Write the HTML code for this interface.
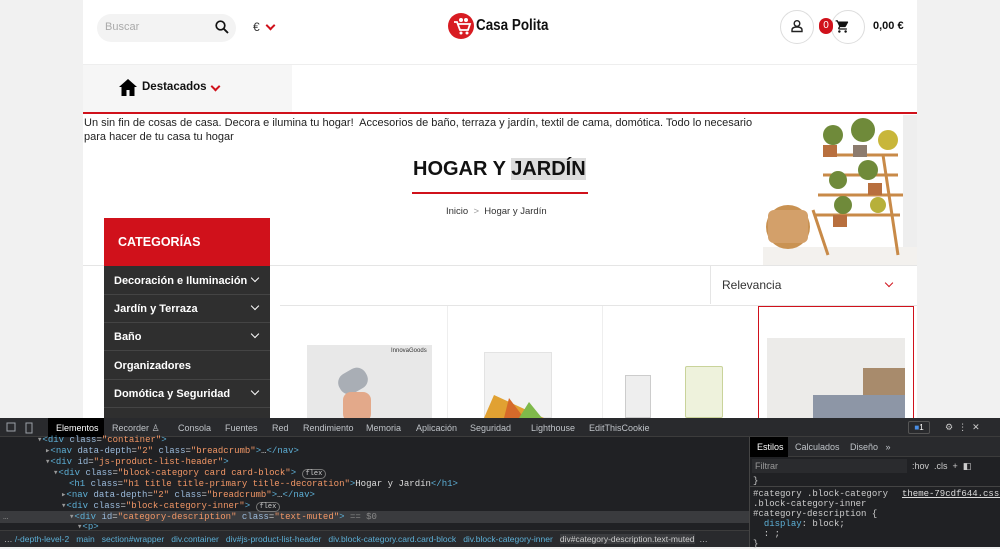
<!DOCTYPE html>
<html><head><meta charset="utf-8"><style>
*{box-sizing:border-box;margin:0;padding:0}
body{width:1000px;height:547px;overflow:hidden;background:#f1f1f1;font-family:"Liberation Sans","DejaVu Sans",sans-serif;position:relative}
.abs{position:absolute}
.c{position:absolute;left:83px;top:0;width:834px;height:418px;background:#fff;overflow:hidden}
.mono{font-family:"Liberation Mono","DejaVu Sans Mono",monospace}
.chev{display:inline-block;width:7px;height:7px;border-right:2px solid #d0111b;border-bottom:2px solid #d0111b;transform:rotate(45deg)}
.wch{position:absolute;right:12px;width:6px;height:6px;border-right:1.5px solid #fff;border-bottom:1.5px solid #fff;transform:rotate(45deg)}
.cat{position:absolute;left:0;width:166px;height:28px;background:#2f2f2f;color:#fff;font-weight:bold;font-size:11px;padding:8px 0 0 10px;border-bottom:1px solid #444}
.tab{color:#bfc3c8;font-size:9px;position:absolute;top:5px}
.dl{position:absolute;font-size:9px;color:#ccc;white-space:nowrap}
.tg{color:#5db0d7}.at{color:#9bbbdc}.av{color:#f29766}.tx{color:#ddd}
</style></head><body>
<div class="c">
 <div class="abs" style="left:14px;top:14px;width:139px;height:28px;background:#f3f3f3;border-radius:14px"></div>
 <div class="abs" style="left:22px;top:21px;font-size:11px;color:#aaa">Buscar</div>
 <svg class="abs" style="left:132px;top:20px" width="14" height="14" viewBox="0 0 14 14"><circle cx="5.5" cy="5.5" r="4.3" fill="none" stroke="#111" stroke-width="1.7"/><path d="M8.8 8.8L13 13" stroke="#111" stroke-width="1.9"/></svg>
 <div class="abs" style="left:170px;top:20px;font-size:12px;color:#333">€</div>
 <div class="chev abs" style="left:184px;top:22px"></div>
 <svg class="abs" style="left:364px;top:12px" width="28" height="28" viewBox="0 0 28 28"><circle cx="14" cy="14" r="13" fill="#d81c22"/><path d="M7 10h3l3 8h8l2-6H11" fill="none" stroke="#fff" stroke-width="1.8"/><circle cx="14" cy="21" r="1.5" fill="#fff"/><circle cx="20" cy="21" r="1.5" fill="#fff"/><circle cx="14" cy="8" r="2" fill="#fff"/><circle cx="19" cy="8" r="2" fill="#fff"/></svg>
 <div class="abs" style="left:393px;top:17px;font-size:16px;font-weight:bold;color:#111;transform:scaleX(0.84);transform-origin:left top;white-space:nowrap">Casa Polita</div>
 <div class="abs" style="left:697px;top:10px;width:34px;height:34px;border:1px solid #ddd;border-radius:50%"></div>
 <svg class="abs" style="left:707px;top:19px" width="14" height="14" viewBox="0 0 14 14"><circle cx="7" cy="4.5" r="2.8" fill="none" stroke="#222" stroke-width="1.4"/><path d="M2 12.5v-1.5c0-2 2-3 5-3s5 1 5 3v1.5z" fill="none" stroke="#222" stroke-width="1.4"/></svg>
 <div class="abs" style="left:748px;top:10px;width:34px;height:34px;border:1px solid #ddd;border-radius:50%"></div>
 <div class="abs" style="left:736px;top:18px;width:14px;height:16px;border-radius:8px;background:#d0111b;color:#fff;font-size:10px;text-align:center;line-height:16px">0</div>
 <svg class="abs" style="left:752px;top:19px" width="15" height="15" viewBox="0 0 24 24"><path d="M7 18c-1.1 0-2 .9-2 2s.9 2 2 2 2-.9 2-2-.9-2-2-2zM1 2v2h2l3.6 7.6-1.4 2.4c-.1.3-.2.6-.2 1 0 1.1.9 2 2 2h12v-2H7.4c-.1 0-.2-.1-.2-.2v-.1l.9-1.7h7.5c.8 0 1.4-.4 1.7-1l3.6-6.5c.1-.2.1-.3.1-.5 0-.6-.4-1-1-1H5.2l-.9-2H1zm16 16c-1.1 0-2 .9-2 2s.9 2 2 2 2-.9 2-2-.9-2-2-2z" fill="#111"/></svg>
 <div class="abs" style="left:790px;top:20px;font-size:11px;font-weight:bold;color:#111">0,00 €</div>
 <div class="abs" style="left:0;top:64px;width:834px;height:1px;background:#eee"></div>
 <div class="abs" style="left:0;top:65px;width:209px;height:47px;background:#f6f6f6"></div>
 <svg class="abs" style="left:36px;top:79px" width="18" height="17" viewBox="0 0 18 17"><path d="M9 0L0 8h2.5v9h5v-6h3v6h5V8H18z" fill="#000"/></svg>
 <div class="abs" style="left:59px;top:81px;font-size:11.5px;font-weight:bold;color:#111">Destacados</div>
 <div class="chev abs" style="left:129px;top:83px"></div>
 <div class="abs" style="left:0;top:112px;width:834px;height:2px;background:#d0111b"></div>
 <div class="abs" style="left:1px;top:116px;width:680px;font-size:11px;line-height:14px;color:#222">Un sin fin de cosas de casa. Decora e ilumina tu hogar!&nbsp; Accesorios de baño, terraza y jardín, textil de cama, domótica. Todo lo necesario para hacer de tu casa tu hogar</div>
 <div class="abs" style="left:330px;top:158px;font-size:20px;font-weight:bold;color:#111;white-space:nowrap">HOGAR Y <span style="background:#ddd">JARDÍN</span></div>
 <div class="abs" style="left:329px;top:192px;width:176px;height:2px;background:#d0111b"></div>
 <div class="abs" style="left:363px;top:206px;font-size:9.5px;color:#333">Inicio&nbsp;&nbsp;<span style="color:#999">&gt;</span>&nbsp;&nbsp;Hogar y Jardín</div>
 <svg class="abs" style="left:680px;top:115px" width="154" height="150" viewBox="0 0 154 150">
  <rect width="154" height="150" fill="#fff"/><rect x="140" y="0" width="14" height="150" fill="#eee"/>
  <rect x="0" y="132" width="154" height="18" fill="#f3f1ee"/>
  <path d="M50 95 L65 140 M120 40 L135 140 M55 80h85 M60 60h75 M65 40h70 M52 100h85" stroke="#c88a48" stroke-width="3" fill="none"/>
  <ellipse cx="25" cy="112" rx="22" ry="22" fill="#c99252"/><rect x="5" y="95" width="40" height="33" rx="6" fill="#d3a06a"/>
  <g fill="#6f8a3a"><circle cx="70" cy="20" r="10"/><circle cx="100" cy="15" r="12"/><circle cx="125" cy="25" r="10" fill="#c8b63a"/><circle cx="75" cy="65" r="9"/><circle cx="105" cy="55" r="10"/><circle cx="80" cy="90" r="9"/><circle cx="115" cy="90" r="8" fill="#b7b03a"/></g>
  <g fill="#b86f3e"><rect x="60" y="30" width="14" height="12"/><rect x="90" y="30" width="14" height="12" fill="#8c7b6e"/><rect x="105" y="68" width="14" height="12"/><rect x="70" y="100" width="14" height="12"/></g>
 </svg>
 <div class="abs" style="left:0;top:265px;width:834px;height:1px;background:#e5e5e5"></div>
 <div class="abs" style="left:627px;top:266px;width:1px;height:38px;background:#e5e5e5"></div>
 <div class="abs" style="left:639px;top:278px;font-size:12px;color:#333">Relevancia</div>
 <div class="chev abs" style="left:803px;top:280px;width:6px;height:6px;border-width:1.5px"></div>
 <div class="abs" style="left:197px;top:305px;width:637px;height:1px;background:#e5e5e5"></div>
 <div class="abs" style="left:364px;top:306px;width:1px;height:112px;background:#eee"></div>
 <div class="abs" style="left:519px;top:306px;width:1px;height:112px;background:#eee"></div>
 <div class="abs" style="left:675px;top:306px;width:156px;height:114px;border:1.5px solid #d0111b"></div>
 <div class="abs" style="left:224px;top:345px;width:125px;height:73px;background:#e8e8e8"></div>
 <div class="abs" style="left:308px;top:348px;font-size:6px;color:#333">InnovaGoods</div>
 <div class="abs" style="left:255px;top:370px;width:30px;height:22px;background:#a9aeb5;border-radius:10px;transform:rotate(-30deg)"></div>
 <div class="abs" style="left:260px;top:392px;width:28px;height:30px;background:#e3a98a;border-radius:8px"></div>
 <div class="abs" style="left:401px;top:352px;width:68px;height:66px;background:#f2f2f2;border:1px solid #e3e3e3"></div>
 <svg class="abs" style="left:401px;top:390px" width="68" height="28"><path d="M0 28 L10 5 L60 28Z" fill="#e1a132"/><path d="M20 28 L25 8 L40 28Z" fill="#d66a2a"/><path d="M35 28 L45 12 L58 28Z" fill="#7fb94a"/></svg>
 <div class="abs" style="left:542px;top:375px;width:26px;height:43px;background:#eee;border:1px solid #ccc"></div>
 <div class="abs" style="left:602px;top:366px;width:38px;height:52px;background:#eef2dc;border:1px solid #c9d39a;border-radius:2px"></div>
 <div class="abs" style="left:684px;top:338px;width:138px;height:80px;background:#ecebe9"></div>
 <div class="abs" style="left:780px;top:368px;width:42px;height:50px;background:#a88b6c"></div>
 <div class="abs" style="left:730px;top:395px;width:92px;height:23px;background:#8d96a6"></div>
 <div class="abs" style="left:21px;top:218px;width:166px;height:48px;background:#d0111b;color:#fff;font-weight:bold;font-size:12.5px;padding:17px 0 0 14px">CATEGORÍAS</div>
 <div class="abs" style="left:21px;top:266px;width:166px;height:152px;background:#2f2f2f">
  <div class="cat" style="top:1px">Decoración e Iluminación<span class="wch" style="top:8px"></span></div>
  <div class="cat" style="top:29px">Jardín y Terraza<span class="wch" style="top:8px"></span></div>
  <div class="cat" style="top:57px">Baño<span class="wch" style="top:8px"></span></div>
  <div class="cat" style="top:86px">Organizadores</div>
  <div class="cat" style="top:114px">Domótica y Seguridad<span class="wch" style="top:8px"></span></div>
 </div>
</div>
<div class="abs" style="left:0;top:418px;width:1000px;height:129px;background:#202124"></div>
<div class="abs" style="left:0;top:418px;width:1000px;height:19px;background:#292a2d;border-bottom:1px solid #3c3c3c"></div>
<svg class="abs" style="left:6px;top:422px" width="30" height="12"><rect x="1" y="1" width="8" height="8" fill="none" stroke="#9aa0a6"/><rect x="20" y="1" width="6" height="10" fill="none" stroke="#9aa0a6"/></svg>
<div class="abs" style="left:48px;top:418px;width:56px;height:19px;background:#000"></div>
<div class="tab" style="left:56px;top:423px;color:#fff">Elementos</div>
<div class="tab" style="left:112px;top:423px">Recorder ♙</div>
<div class="tab" style="left:178px;top:423px">Consola</div>
<div class="tab" style="left:225px;top:423px">Fuentes</div>
<div class="tab" style="left:272px;top:423px">Red</div>
<div class="tab" style="left:303px;top:423px">Rendimiento</div>
<div class="tab" style="left:366px;top:423px">Memoria</div>
<div class="tab" style="left:416px;top:423px">Aplicación</div>
<div class="tab" style="left:470px;top:423px">Seguridad</div>
<div class="tab" style="left:531px;top:423px">Lighthouse</div>
<div class="tab" style="left:589px;top:423px">EditThisCookie</div>
<div class="abs" style="left:908px;top:421px;width:22px;height:13px;border:1px solid #555;border-radius:2px;font-size:8px;color:#fff;text-align:center;line-height:11px"><span style="color:#4a8fe7">■</span>1</div>
<div class="tab" style="left:945px;top:422px;color:#ccc">⚙&nbsp;&nbsp;⋮&nbsp;&nbsp;✕</div>
<div class="abs" style="left:749px;top:437px;width:1px;height:110px;background:#444"></div>
<div class="abs" style="left:0;top:511px;width:749px;height:12px;background:#3a3b3e"></div>
<div class="dl mono" style="left:37px;top:435px"><span style="color:#999">▾</span><span class="tg">&lt;div</span> <span class="at">class</span>=<span class="av">"container"</span><span class="tg">&gt;</span></div>
<div class="dl mono" style="left:45px;top:446px"><span style="color:#999">▸</span><span class="tg">&lt;nav</span> <span class="at">data-depth</span>=<span class="av">"2"</span> <span class="at">class</span>=<span class="av">"breadcrumb"</span><span class="tg">&gt;</span>…<span class="tg">&lt;/nav&gt;</span></div>
<div class="dl mono" style="left:45px;top:457px"><span style="color:#999">▾</span><span class="tg">&lt;div</span> <span class="at">id</span>=<span class="av">"js-product-list-header"</span><span class="tg">&gt;</span></div>
<div class="dl mono" style="left:53px;top:468px"><span style="color:#999">▾</span><span class="tg">&lt;div</span> <span class="at">class</span>=<span class="av">"block-category card card-block"</span><span class="tg">&gt;</span> <span style="border:1px solid #777;border-radius:6px;padding:0 3px;font-size:7px">flex</span></div>
<div class="dl mono" style="left:69px;top:479px"><span class="tg">&lt;h1</span> <span class="at">class</span>=<span class="av">"h1 title title-primary title--decoration"</span><span class="tg">&gt;</span><span class="tx">Hogar y Jardín</span><span class="tg">&lt;/h1&gt;</span></div>
<div class="dl mono" style="left:61px;top:490px"><span style="color:#999">▸</span><span class="tg">&lt;nav</span> <span class="at">data-depth</span>=<span class="av">"2"</span> <span class="at">class</span>=<span class="av">"breadcrumb"</span><span class="tg">&gt;</span>…<span class="tg">&lt;/nav&gt;</span></div>
<div class="dl mono" style="left:61px;top:501px"><span style="color:#999">▾</span><span class="tg">&lt;div</span> <span class="at">class</span>=<span class="av">"block-category-inner"</span><span class="tg">&gt;</span> <span style="border:1px solid #777;border-radius:6px;padding:0 3px;font-size:7px">flex</span></div>
<div class="dl mono" style="left:3px;top:512px;color:#888">…</div>
<div class="dl mono" style="left:69px;top:512px"><span style="color:#999">▾</span><span class="tg">&lt;div</span> <span class="at">id</span>=<span class="av">"category-description"</span> <span class="at">class</span>=<span class="av">"text-muted"</span><span class="tg">&gt;</span> <span style="color:#888">== $0</span></div>
<div class="dl mono" style="left:77px;top:522px"><span style="color:#999">▾</span><span class="tg">&lt;p&gt;</span></div>
<div class="abs" style="left:0;top:530px;width:749px;height:17px;background:#292a2d;border-top:1px solid #3c3c3c"></div>
<div class="dl" style="left:4px;top:534px;color:#5db0d7;font-size:8.5px"><span style="color:#ccc">…</span> /-depth-level-2 &nbsp; main &nbsp; section#wrapper &nbsp; div.container &nbsp; div#js-product-list-header &nbsp; div.block-category.card.card-block &nbsp; div.block-category-inner &nbsp; <span style="background:#3a3b3e;color:#ccc">div#category-description.text-muted</span> &nbsp;<span style="color:#ccc">…</span></div>
<div class="abs" style="left:750px;top:437px;width:250px;height:20px;background:#292a2d;border-bottom:1px solid #3c3c3c"></div>
<div class="abs" style="left:750px;top:437px;width:38px;height:20px;background:#000"></div>
<div class="tab" style="left:757px;top:442px;color:#fff">Estilos</div>
<div class="tab" style="left:795px;top:442px">Calculados</div>
<div class="tab" style="left:850px;top:442px">Diseño&nbsp;&nbsp;&nbsp;»</div>
<div class="abs" style="left:752px;top:459px;width:155px;height:14px;background:#2a2b2e"></div>
<div class="tab" style="left:755px;top:461px;color:#999">Filtrar</div>
<div class="tab" style="left:912px;top:461px;color:#ccc">:hov&nbsp;&nbsp;.cls&nbsp;&nbsp;+&nbsp;&nbsp;◧</div>
<div class="dl mono" style="left:753px;top:476px">}</div>
<div class="abs" style="left:750px;top:486px;width:250px;height:1px;background:#444"></div>
<div class="dl mono" style="left:753px;top:489px;line-height:10px">#category .block-category<br>.block-category-inner<br>#category-description {<br>&nbsp;&nbsp;<span style="color:#5db0d7">display</span>: block;<br>&nbsp;&nbsp;: ;<br>}</div>
<div class="dl mono" style="left:902px;top:489px;text-decoration:underline;color:#ddd">theme-79cdf644.css:17</div>
</body></html>
